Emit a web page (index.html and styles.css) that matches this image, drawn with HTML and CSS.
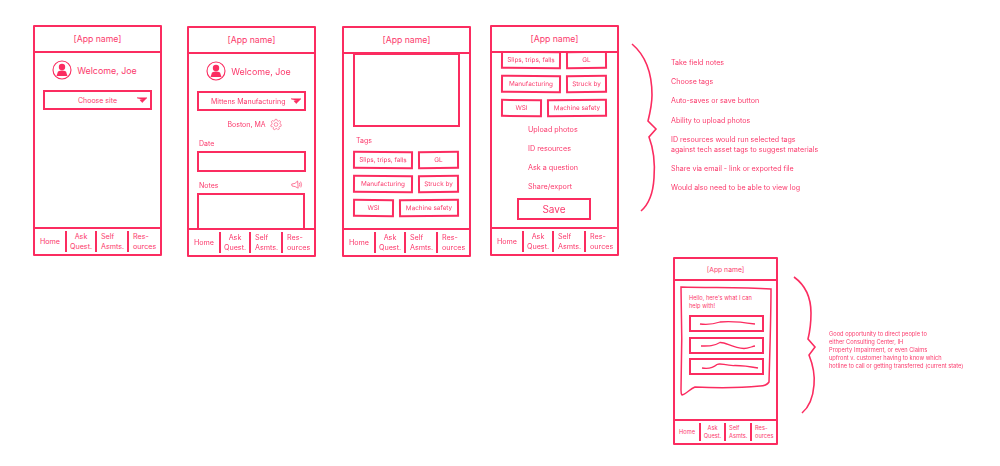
FILE: index.html
```html
<!DOCTYPE html>
<html lang="en">
<head>
  <meta charset="UTF-8" />
  <title>App wireframes</title>
  <link rel="stylesheet" href="styles.css">
</head>
<body>
  <div class="canvas">

    <!-- screen 1: choose site -->
    <section class="phone phone-1">
      <header class="app-bar">[App name]</header>
      <main class="screen">
        <div class="welcome">
          <svg class="avatar" viewBox="0 0 20 20"><circle cx="10" cy="10" r="9" fill="none" stroke="#fb2c60" stroke-width="1.1"/><circle cx="10" cy="7" r="3.2" fill="#fb2c60"/><path d="M4.5 16 L6 11.5 Q10 9.5 14 11.5 L15.5 16 Z" fill="#fb2c60"/></svg>
          <span>Welcome, Joe</span>
        </div>
        <div class="select select-short">
          <span>Choose site</span>
          <svg class="caret" viewBox="0 0 10 6"><path d="M0 .8 H10 L5.2 5.6 L3 3 H6 Z" fill="#fb2c60" stroke="#fb2c60" stroke-width=".5"/></svg>
        </div>
      </main>
      <nav class="tabs">
        <span>Home</span><span>Ask<br>Quest.</span><span>Self<br>Asmts.</span><span>Res-<br>ources</span>
      </nav>
    </section>

    <!-- screen 2: site + notes -->
    <section class="phone phone-2">
      <header class="app-bar">[App name]</header>
      <main class="screen">
        <div class="welcome">
          <svg class="avatar" viewBox="0 0 20 20"><circle cx="10" cy="10" r="9" fill="none" stroke="#fb2c60" stroke-width="1.1"/><circle cx="10" cy="7" r="3.2" fill="#fb2c60"/><path d="M4.5 16 L6 11.5 Q10 9.5 14 11.5 L15.5 16 Z" fill="#fb2c60"/></svg>
          <span>Welcome, Joe</span>
        </div>
        <div class="select">
          <span>Mittens Manufacturing</span>
          <svg class="caret" viewBox="0 0 10 6"><path d="M0 .8 H10 L5.2 5.6 L3 3 H6 Z" fill="#fb2c60" stroke="#fb2c60" stroke-width=".5"/></svg>
        </div>
        <div class="location">
          <span>Boston, MA</span>
          <svg class="gear" viewBox="0 0 14 14" fill="none" stroke="#fb5c84" stroke-width=".8"><circle cx="7" cy="7" r="2.2"/><path d="M6 1 H8 L8.4 2.6 L9.9 3.2 L11.3 2.4 L12.6 4 L11.5 5.2 L11.8 6.5 L13.2 7.2 L12.8 9.2 L11.2 9.2 L10.4 10.5 L11 12 L9.2 13 L8.1 11.8 L6.5 11.9 L5.6 13.2 L3.6 12.2 L4.1 10.7 L3 9.6 L1.4 9.6 L.9 7.6 L2.3 6.8 L2.5 5.2 L1.4 4 L2.8 2.4 L4.3 3.1 L5.6 2.5 Z"/></svg>
        </div>
        <label class="field-label">Date</label>
        <div class="input"></div>
        <div class="notes-head">
          <label class="field-label">Notes</label>
          <svg class="speaker" viewBox="0 0 12 10" fill="none" stroke="#fb5c84" stroke-width=".8"><path d="M.7 4 L4 3.4 L6.6 1 L7.2 8.2 L4.2 6.6 L1 6 Z"/><path d="M8.3 2.8 Q9.4 4.6 8.5 6.4"/><path d="M9.6 1.6 Q11.4 4.6 9.8 7.4"/></svg>
        </div>
        <div class="textarea"></div>
      </main>
      <nav class="tabs">
        <span>Home</span><span>Ask<br>Quest.</span><span>Self<br>Asmts.</span><span>Res-<br>ources</span>
      </nav>
    </section>

    <!-- screen 3: photo + tags -->
    <section class="phone phone-3">
      <header class="app-bar">[App name]</header>
      <main class="screen">
        <div class="photo"></div>
        <div class="tags-label">Tags</div>
        <div class="tag-list">
          <div class="tag-row row-a"><span class="tag">Slips, trips, falls</span><span class="tag">GL</span></div>
          <div class="tag-row row-a"><span class="tag">Manufacturing</span><span class="tag">Struck by</span></div>
          <div class="tag-row row-b"><span class="tag">WSI</span><span class="tag">Machine safety</span></div>
        </div>
      </main>
      <nav class="tabs">
        <span>Home</span><span>Ask<br>Quest.</span><span>Self<br>Asmts.</span><span>Res-<br>ources</span>
      </nav>
    </section>

    <!-- screen 4: scrolled down, actions -->
    <section class="phone phone-4">
      <header class="app-bar">[App name]</header>
      <main class="screen">
        <div class="tag-list">
          <div class="tag-row row-a"><span class="tag">Slips, trips, falls</span><span class="tag">GL</span></div>
          <div class="tag-row row-a"><span class="tag">Manufacturing</span><span class="tag">Struck by</span></div>
          <div class="tag-row row-b"><span class="tag">WSI</span><span class="tag">Machine safety</span></div>
        </div>
        <ul class="actions">
          <li>Upload photos</li>
          <li>ID resources</li>
          <li>Ask a question</li>
          <li>Share/export</li>
        </ul>
        <div class="save">Save</div>
      </main>
      <nav class="tabs">
        <span>Home</span><span>Ask<br>Quest.</span><span>Self<br>Asmts.</span><span>Res-<br>ources</span>
      </nav>
    </section>

    <!-- brackets for the two note blocks -->
    <svg class="bracket" width="1000" height="466" viewBox="0 0 1000 466" fill="none" stroke="#fb2c60" stroke-width="1.6">
      <path d="M632 44 C645 55 652 72 652 95 C652 105 650 113 648 121 L656 129 L649 137 C654 150 655 165 654 178 C653 195 648 205 641 211"/>
      <path d="M794 277 C805 285 811 298 811 313 C811 323 810 331 808 339 L815 347 L809 355 C813 365 815 375 814 385 C813 398 808 408 802 413"/>
    </svg>

    <div class="side-notes">
      <p>Take field notes</p>
      <p>Choose tags</p>
      <p>Auto-saves or save button</p>
      <p>Ability to upload photos</p>
      <p>ID resources would run selected tags<br>against tech asset tags to suggest materials</p>
      <p>Share via email - link or exported file</p>
      <p>Would also need to be able to view log</p>
    </div>

    <!-- screen 5: chat -->
    <section class="phone phone-5">
      <header class="app-bar">[App name]</header>
      <main class="screen">
        <div class="bubble">
          <svg class="bubble-shape" viewBox="0 0 92 110" fill="none" stroke="#fb2c60" stroke-width="1.5"><path d="M1 1 C30 2 60 1 91 3 C91 30 90 60 89 96 C87 99 85 100 80 100 C60 102 35 102 15 101 C10 103 6 108 2 109 C1 108 1 106 1 104 C2 70 2 35 1 1 Z"/></svg>
          <p class="bubble-text">Hello, here's what I can<br>help with!</p>
          <div class="reply"><svg viewBox="0 0 69 13" fill="none" stroke="#fb2c60" stroke-width="1.3"><path d="M8 7 C16 8 22 7 28 5 C36 4 50 5 63 7"/></svg></div>
          <div class="reply"><svg viewBox="0 0 69 13" fill="none" stroke="#fb2c60" stroke-width="1.3"><path d="M9 7 C17 7 22 7 28 3.5 C34 3 40 9 52 9.5 C56 9.5 60 7.5 63 7"/></svg></div>
          <div class="reply"><svg viewBox="0 0 69 13" fill="none" stroke="#fb2c60" stroke-width="1.3"><path d="M10 8 C16 9 21 8 25 4.5 C29 2.5 33 6 43 5.5 C51 5.5 58 6.5 66 8"/></svg></div>
        </div>
      </main>
      <nav class="tabs">
        <span>Home</span><span>Ask<br>Quest.</span><span>Self<br>Asmts.</span><span>Res-<br>ources</span>
      </nav>
    </section>

    <div class="side-notes-small">
      <p>Good opportunity to direct people to</p>
      <p>either Consulting Center, IH</p>
      <p>Property Impairment, or even Claims</p>
      <p>upfront v. customer having to know which</p>
      <p>hotline to call or getting transferred (current state)</p>
    </div>

  </div>
</body>
</html>
```

FILE: styles.css
```css
body {
  margin: 0;
  background-color: #ffffff;
  font-family: Inter, "Liberation Sans", sans-serif;
  color: #fb3a6c;
}

/* the source is a scaled down sketch, so everything is a bit soft */
.canvas {
  position: relative;
  width: 1000px;
  height: 466px;
  overflow: hidden;
  filter: blur(0.4px);
}

/* phones sit on a free canvas */
.phone {
  position: absolute;
  box-sizing: border-box;
  width: 129px;
  height: 231px;
  display: flex;
  flex-direction: column;
  border: 2px solid #fb2c60;
  border-radius: 1px;
  background-color: #ffffff;
}

.phone-1 { left: 33px; top: 25px; }
.phone-2 { left: 187px; top: 26px; }
.phone-3 { left: 342px; top: 26px; }
.phone-4 { left: 490px; top: 25px; }
.phone-5 { left: 673px; top: 257px; width: 105px; height: 188px; }

.app-bar {
  height: 24px;
  flex: none;
  display: flex;
  align-items: center;
  justify-content: center;
  border-bottom: 2px solid #fb2c60;
  font-size: 8.7px;
}

.screen {
  flex: 1;
  min-height: 0;
  overflow: hidden;
}

.tabs {
  height: 27px;
  flex: none;
  box-sizing: border-box;
  display: grid;
  grid-template-columns: 30px 30px 32px 1fr;
  align-items: center;
  padding: 2px 0;
  border-top: 2px solid #fb2c60;
  font-size: 7.2px;
  line-height: 9.5px;
  text-align: center;
}

.tabs span {
  height: 100%;
  display: flex;
  align-items: center;
  justify-content: center;
}

.tabs span + span {
  border-left: 2px solid #fb2c60;
}

.tabs span:nth-child(n+3) {
  justify-content: flex-start;
  padding-left: 4px;
  text-align: left;
}

.welcome {
  display: flex;
  align-items: center;
  justify-content: center;
  gap: 5px;
  padding: 7px 6px 0 0;
  font-size: 8.9px;
}

.avatar {
  width: 20px;
  height: 20px;
}

.select {
  position: relative;
  box-sizing: border-box;
  height: 20px;
  margin: 10px 8px 0;
  display: flex;
  align-items: center;
  padding-left: 12px;
  border: 2px solid #fb2c60;
  font-size: 7px;
}

.select-short {
  justify-content: center;
  padding-left: 0;
}

.caret {
  position: absolute;
  right: 3px;
  top: 5px;
  width: 10px;
  height: 6px;
}

.location {
  display: flex;
  align-items: center;
  justify-content: center;
  gap: 4px;
  padding: 7px 0 0 6px;
  font-size: 7px;
}

.gear {
  width: 12px;
  height: 13px;
}

.field-label {
  display: block;
  padding: 8px 0 0 10px;
  font-size: 7px;
}

.input {
  box-sizing: border-box;
  height: 21px;
  margin: 3px 8px 0;
  border: 2px solid #fb2c60;
}

.notes-head {
  display: flex;
  justify-content: space-between;
  align-items: flex-end;
  padding: 1px 11px 0 0;
}

.speaker {
  width: 12px;
  height: 10px;
}

.textarea {
  box-sizing: border-box;
  height: 40px;
  margin: 3px 9px 0 8px;
  border: 2px solid #fb2c60;
}

.photo {
  box-sizing: border-box;
  height: 74px;
  margin: -1px 9px 0 9px;
  border: 2px solid #fb2c60;
}

.tags-label {
  padding: 9px 0 0 12px;
  font-size: 7px;
  line-height: 9px;
}

.tag-list {
  display: flex;
  flex-direction: column;
  gap: 6px;
  padding: 0 9px;
}

.tags-label + .tag-list {
  margin-top: 6px;
}

.phone-4 .tag-list {
  padding: 0 8px 0 9px;
  margin-top: -2px;
}

.tag-row {
  display: grid;
  gap: 5px;
}

.row-a { grid-template-columns: 60px 41px; }
.row-b { grid-template-columns: 41px 60px; }

/* a little wobble so the boxes read as drawn by hand */
.tag {
  box-sizing: border-box;
  height: 18px;
  display: flex;
  align-items: center;
  justify-content: center;
  border: 2px solid #fb2c60;
  font-size: 6.4px;
  white-space: nowrap;
  transform: rotate(0.4deg);
}

.tag:nth-child(2) {
  transform: rotate(-0.5deg);
}

.actions {
  list-style: none;
  margin: 0;
  padding: 3px 0 0 36px;
  font-size: 7.2px;
  line-height: 19px;
}

.save {
  box-sizing: border-box;
  width: 74px;
  height: 22px;
  margin: 2px 0 0 25px;
  display: flex;
  align-items: center;
  justify-content: center;
  border: 2px solid #fb2c60;
  font-size: 10px;
}

.bracket {
  position: absolute;
  left: 0;
  top: 0;
}

.side-notes {
  position: absolute;
  left: 671px;
  top: 58px;
  font-size: 7.1px;
  line-height: 10px;
}

.side-notes p {
  margin: 0 0 9.2px;
}

.side-notes-small {
  position: absolute;
  left: 829px;
  top: 330px;
  font-size: 5.7px;
  line-height: 8px;
}

.side-notes-small p {
  margin: 0;
}

.phone-5 .app-bar {
  height: 20px;
  font-size: 6.8px;
}

.phone-5 .tabs {
  height: 24px;
  grid-template-columns: 24px 25px 26px 1fr;
  font-size: 5.7px;
  line-height: 8px;
}

.phone-5 .tabs span:nth-child(n+3) {
  padding-left: 3px;
}

.bubble {
  position: relative;
  box-sizing: border-box;
  width: 92px;
  height: 110px;
  margin: 5px 0 0 5px;
  padding: 8px 8px 0 9px;
}

.bubble-shape {
  position: absolute;
  left: 0;
  top: 0;
  width: 92px;
  height: 110px;
}

.bubble-text {
  margin: 0 0 5px;
  font-size: 5.7px;
  line-height: 8px;
}

.reply {
  box-sizing: border-box;
  height: 17px;
  margin-bottom: 4.5px;
  border: 2px solid #fb2c60;
}

.reply svg {
  display: block;
  width: 100%;
  height: 100%;
}
```
